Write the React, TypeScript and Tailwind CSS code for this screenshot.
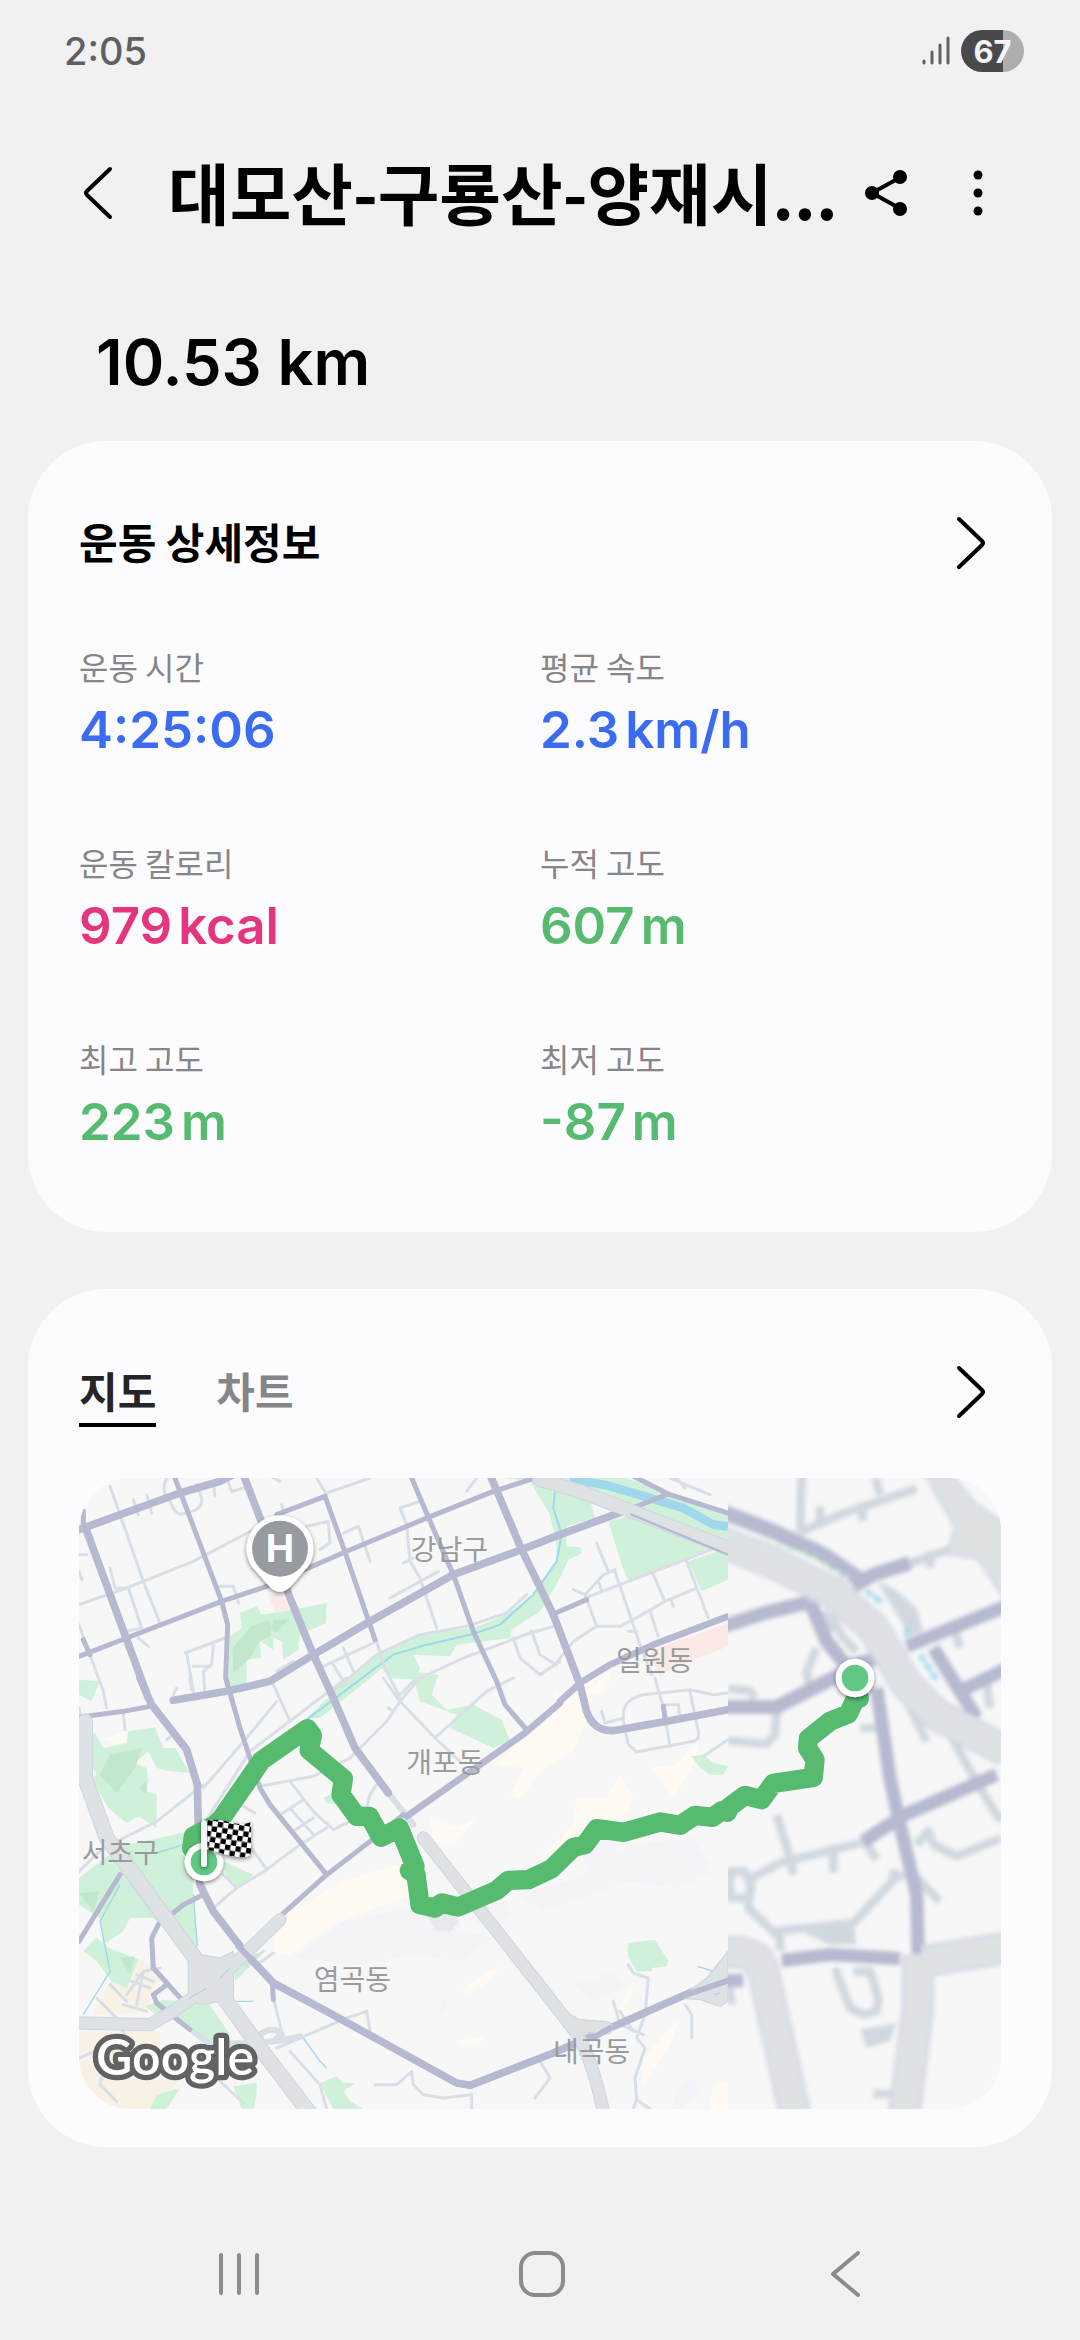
import React from "react";

const KR = "font-['Noto_Sans_CJK_KR',sans-serif]";

function Chevron({ left = false }: { left?: boolean }) {
  return (
    <svg
      viewBox="0 0 32 56"
      className={left ? "h-14 w-8 rotate-180" : "h-14 w-8"}
      fill="none"
      stroke="currentColor"
      strokeWidth="4"
      strokeLinecap="round"
      strokeLinejoin="round"
      aria-hidden="true"
    >
      <path d="M4 4 L27 26 Q29 28 27 30 L4 52" />
    </svg>
  );
}

function StatusBar() {
  return (
    <div className="flex h-[102px] items-center justify-between pr-14 pl-16 text-[#606062]">
      <span className="font-['Inter',sans-serif] text-[38px] leading-none font-medium">2:05</span>
      <div className="flex items-center gap-2.5">
        <svg viewBox="0 0 30 30" className="size-[30px]" stroke="#606062" strokeWidth="3" strokeLinecap="round" aria-label="신호">
          <path d="M3 25V27M11 16V27M19 9V27M27 2V27" />
        </svg>
        <span className="flex h-[42px] w-[63px] items-center justify-center rounded-full bg-linear-to-r from-[#49494b] from-66% to-[#aeaeb0] to-66% font-['Inter',sans-serif] text-[31px] leading-none font-bold text-[#f4f4f6]">
          67
        </span>
      </div>
    </div>
  );
}

function AppHeader() {
  return (
    <header className="flex h-[182px] items-center pr-[78px] pl-[78px]">
      <button type="button" aria-label="뒤로" className="flex w-10 shrink-0 justify-center">
        <Chevron left />
      </button>
      <h1 className="ml-[50px] min-w-0 flex-1 pb-1 text-[67px] leading-[100px] font-bold whitespace-nowrap">
        대모산-구룡산-양재시...
      </h1>
      <button type="button" aria-label="공유" className="shrink-0">
        <svg viewBox="0 0 44 48" className="h-12 w-11" aria-hidden="true">
          <path d="M37 8 L8 24 L37 40" fill="none" stroke="#000" strokeWidth="4" />
          <circle cx="36" cy="8" r="7" />
          <circle cx="8" cy="24" r="7" />
          <circle cx="36" cy="40" r="7" />
        </svg>
      </button>
      <button type="button" aria-label="더보기" className="ml-[46px] flex w-12 shrink-0 justify-center">
        <svg viewBox="0 0 12 48" className="h-12 w-3" aria-hidden="true">
          <circle cx="6" cy="6" r="4.5" />
          <circle cx="6" cy="24" r="4.5" />
          <circle cx="6" cy="42" r="4.5" />
        </svg>
      </button>
    </header>
  );
}

type Stat = { label: string; value: string; unit?: string; color: string };

const stats: Stat[] = [
  { label: "운동 시간", value: "4:25:06", color: "text-[#3a6bf0]" },
  { label: "평균 속도", value: "2.3", unit: "km/h", color: "text-[#3a6bf0]" },
  { label: "운동 칼로리", value: "979", unit: "kcal", color: "text-[#e6357f]" },
  { label: "누적 고도", value: "607", unit: "m", color: "text-[#56bb6f]" },
  { label: "최고 고도", value: "223", unit: "m", color: "text-[#56bb6f]" },
  { label: "최저 고도", value: "-87", unit: "m", color: "text-[#56bb6f]" },
];

function DetailCard() {
  return (
    <section className="rounded-[78px] bg-[#fcfcff] px-[51px] pt-[70px] pb-[70px]">
      <div className="flex items-center justify-between pr-3.5">
        <h2 className="pb-1 text-[42px] leading-[60px] font-bold">운동 상세정보</h2>
        <button type="button" aria-label="운동 상세정보 보기">
          <Chevron />
        </button>
      </div>
      <dl className="mt-[67px] grid grid-cols-2 gap-y-[68px]">
        {stats.map((s) => (
          <div key={s.label}>
            <dt className="text-[32px] leading-[48px] text-[#868688]">{s.label}</dt>
            <dd className={`flex gap-1.5 font-['Inter',sans-serif] text-[51px] leading-[80px] font-semibold ${s.color}`}>
              <span>{s.value}</span>
              {s.unit && <span>{s.unit}</span>}
            </dd>
          </div>
        ))}
      </dl>
    </section>
  );
}

const wide = "#dee2e5";
const road = "#b6b9cf";
const minor = "#d9dfe6";
const green = "#cff1d9";
const darkGreen = "#c1e7cc";
const water = "#9fd8ea";
const cream = "#fffbf3";
const mauve = "#f4f3f7";

function Terrain() {
  return (
    <g>
      <g fill={mauve}>
        <path d="M700 2040 L850 1930 1050 1890 1200 1960 1300 1980 1200 2050 1050 2030 900 2060Z M1370 1850 L1560 1800 1700 1700 1900 1680 1960 1780 1850 1830 1700 1810 1600 1850 1450 1900Z M1840 2440 L1900 2400 1920 2440 1860 2493 1840 2493Z M1200 1900 L1340 1870 1360 1900 1300 1960Z M1560 1680 L1680 1690 1640 1780 1580 1800Z M1140 2160 L1165 2180 1145 2210Z M1540 2120 L1660 2080 1690 2130 1600 2170Z" />
      </g>
      <g fill={cream}>
        <path d="M660 1920 L850 1810 1010 1760 1060 1850 950 1890 820 1940 690 2030 640 2020Z" />
        <path d="M1300 1460 L1460 1330 1520 1280 1600 1200 1590 1300 1540 1420 1440 1480 1380 1565 1350 1550 1390 1470Z" />
        <path d="M1110 1620 L1190 1650 1250 1620 1180 1700 1120 1690Z M1210 2130 L1320 2060 1290 2110 1215 2150Z M1190 2290 L1270 2275 1260 2300 1200 2300Z M1550 1560 L1640 1560 1680 1490 1720 1560 1700 1610 1560 1680 1480 1760 1440 1740 1540 1640Z M1770 1470 L1850 1460 1920 1380 1900 1460 1840 1560 1800 1500Z M1440 1360 L1490 1290 1480 1400 1440 1450Z M1680 2180 L1720 2110 1710 2160 1670 2220Z M1750 2340 L1860 2220 1830 2300 1750 2420Z M1960 2420 L2004 2410 2004 2493 1950 2493Z M1580 1240 L1660 1170 1630 1250Z M1480 1240 L1540 1270 1500 1310Z M130 1385 L200 1355 195 1395Z" />
      </g>
      <g fill="#f7f2e5">
        <path d="M57 2260 H300 V2310 L280 2400 370 2400 265 2493 H57Z M150 2110 L230 2040 300 2080 260 2200 100 2210Z" />
      </g>
      <path d="M1090 1900 L1150 1890 1200 1930 1170 1962 1130 1960Z" fill="#e6eaef" />
      <g fill="#fae9e4">
        <path d="M625 950 L670 945 685 995 645 998Z M1770 1120 L2004 1035 V1105 L1840 1170 1800 1195Z" />
      </g>
      <g fill={green}>
        <path d="M540 1005 L590 985 605 1010 680 998 800 975 798 1035 720 1070 715 1115 670 1145 665 1090 640 1080 640 1115 600 1090 603 1140 560 1145 560 1225 503 1228 510 1075 545 1050Z" />
        <path d="M1335 600 H1420 L1590 665 1605 720 1520 745 1520 805 1562 808 1566 825 1525 845 1500 900 1460 970 1440 1000 1355 1055 1350 1080 1190 1100 1170 1135 1060 1130 1080 1170 1070 1205 985 1200 965 1170 920 1210 780 1320 740 1320 830 1235 975 1115 1040 1085 1130 1060 1240 1050 1340 1010 1430 940 1490 850 1488 790 1470 710 1410 610Z" />
        <path d="M1500 600 H1700 L2004 710 V790 L1840 730Z M1645 730 L1720 710 1955 810 1705 908 1685 860Z M1885 850 L2004 810 V905 L1925 940Z" />
        <path d="M70 1370 L105 1365 130 1410 200 1395 205 1360 285 1348 300 1385 310 1410 345 1410 390 1485 330 1480 290 1470 265 1420 225 1455 260 1470 265 1510 235 1530 290 1550 290 1650 235 1615 200 1635 145 1590 95 1500 110 1490 80 1440Z" />
        <path d="M57 1800 L180 1705 390 1660 400 1850 412 2020 300 1920 210 1920 190 1960 130 2000 120 1920 57 1880Z M70 2020 L110 1978 145 2010 200 2030 235 2045 200 2130 155 2110 110 2050Z" />
        <path d="M255 2185 L310 2165 450 2180 510 2270 430 2295 360 2220 300 2220Z M490 1750 L580 1790 530 1835 500 1800Z M520 2030 L610 2025 525 2110Z" />
        <path d="M1055 1180 L1135 1190 1115 1250 1160 1295 1240 1280 1325 1325 1350 1390 1300 1410 1170 1350 1190 1310 1080 1270Z M790 1560 L820 1545 830 1580 800 1575Z M780 2415 L830 2395 850 2415 885 2415 850 2440 870 2470 910 2493 820 2493Z M520 2425 L590 2415 590 2450 580 2493 545 2493Z M57 1205 L120 1210 95 1270 57 1250Z M290 2450 L360 2430 320 2493 270 2493Z M505 1200 H560 V1215 L510 1225Z" />
        <path d="M1895 1435 L1930 1430 1960 1455 2004 1465 1990 1490 1950 1490 1920 1470Z M1705 1995 L1785 1985 1825 2050 1820 2065 1775 2070 1775 2080 1730 2080 1702 2030Z" />
      </g>
      <g fill={darkGreen}>
        <path d="M575 1045 L625 1025 645 1065 690 1025 640 1025 630 1075 600 1090 570 1140 520 1185 517 1110Z M150 1430 L245 1410 225 1470 170 1545 120 1490Z M235 1530 L262 1510 260 1550Z M57 1845 L120 1840 100 1900Z M180 2040 L225 2035 210 2090Z" />
      </g>
      <g fill="none" stroke={water}>
        <path d="M740 1325 L1000 1130 1100 1100 1240 1068 1320 1040 1420 950 1490 850 1505 770 1480 690 1485 640" strokeWidth="6" />
        <path d="M1530 603 L1640 622 1770 660 1870 690 1960 740 2004 745" strokeWidth="26" />
        <path d="M70 2210 L150 2080 120 1930 180 1820 M290 1725 L370 1700 M400 1850 L412 2005 M730 2280 L780 2350 800 2370 M530 2170 L580 2170 M1912 2065 L1968 2082" strokeWidth="4" />
      </g>
    </g>
  );
}

function LeftRoads() {
  return (
    <g fill="none" strokeLinejoin="round" strokeLinecap="round">
      <g stroke={minor} strokeWidth="9">
        <path d="M150 625 L180 710 250 910 300 1035 M57 980 L200 930 400 850 590 750 M150 870 L165 930 205 930 245 1050 200 1060 M375 1125 L495 1080 M380 1125 L400 1240 M460 1100 L455 1160 430 1180 435 1250 M400 1165 H450 M320 600 Q300 640 330 670 Q345 710 365 708 Q430 700 425 660 L410 620 M460 620 L465 655 M500 600 L515 640 550 630 M770 600 L800 650 M800 645 L930 600 M1220 640 L1250 600 M1080 670 L1020 690 1040 740 1050 850 1080 900 1130 1050 M990 960 L1135 880 M1030 855 L1060 840" />
        <path d="M740 745 L805 730 810 795 780 815 M850 765 L895 745 930 850 M480 925 L520 925 535 975 M790 1165 L950 1090 M820 1160 L850 1210 M850 1110 L880 1180 M820 1240 L950 1130 1080 1070 1220 1045 1340 1005 1400 950 M950 1090 L970 1160 1020 1260 M1020 1250 L1060 1210 1210 1140 1410 1065 1500 1040 M1360 1080 L1380 1140 1440 1190 1500 1150 M1415 1060 L1440 1130 1490 1160 M57 1040 L130 1240 140 1290 M220 665 L235 710 M260 650 L275 705 M665 680 L670 700 M640 600 L660 610 M57 830 L80 830 M57 880 L66 905 M235 1080 L265 1105 M650 1180 L700 1150" />
        <path d="M1610 795 L1645 880 1665 880 1740 1100 1775 1190 M1540 935 L1575 950 1630 890 1665 875 M1575 960 L1955 815 M1575 950 L1610 1045 1680 1045 1720 1025 1815 970 1910 930 M1880 850 L1945 1020 M1780 890 L1815 970 M1770 1000 L1795 1075 M1610 1045 L1540 1090 1485 1160 1440 1190 M1615 910 L1625 940 M1705 1060 L1730 1060 M1835 970 L1840 985" />
        <path d="M1850 600 L1875 630 M1830 600 L1950 650" />
        <path d="M430 1530 L560 1380 650 1270 M57 1780 L130 1710 290 1630 430 1520 M640 1220 L690 1330 M430 1640 L570 1420 860 1200 M600 1525 L760 1495 870 1440 980 1330 1020 1270 1080 1200 M970 1200 L1020 1270 1125 1380 1200 1450 M1125 1380 L1280 1240 1360 1200 M690 1510 L760 1600 820 1655 870 1630 920 1590 930 1550 950 1520 M660 1610 L730 1565 M700 1660 L760 1620 M690 1590 L760 1670 M460 1890 L530 1830 620 1775 720 1700 800 1650 M560 1690 L620 1775 M540 1580 L585 1605 M490 1790 L530 1830" />
        <path d="M640 2160 L670 2280 M690 2320 L780 2420 800 2493 M650 2310 L860 2220 920 2200 930 2260 M945 2420 H1010 L1055 2380 1060 2420 1090 2450 1150 2460 1235 2450 V2493 M480 2410 L550 2475 M1440 2350 L1470 2400 1425 2460 M560 2060 L610 2020 M590 2060 L640 2025 M190 1300 L195 1355 M57 1290 L75 1370 M320 1385 L345 1365 M340 1250 L350 1230 M390 1200 L395 1235 M985 1290 L1000 1300" />
        <path d="M1690 1330 V1300 Q1700 1260 1750 1250 L1890 1235 1960 1250 2004 1245 M1690 1330 L1705 1400 1730 1422 1900 1390 Q1920 1385 1915 1360 L1890 1240 M1785 1200 L1810 1290 1830 1405 M1625 1300 L1635 1335 1690 1320 M1815 1280 H1855 L1860 1325 M1705 2060 L1720 2085 1765 2100 1755 2210 1730 2280 1755 2310 1725 2400 1730 2465 1770 2493 M1730 2460 L1720 2493 M1875 2180 L1895 2210 V2280 M1930 1435 L2004 1385 M1660 2170 L1680 2240 1750 2270 M1680 2200 L1720 2260" />
        <path d="M200 2150 L250 2080 300 2070 M190 2180 L260 2200 M215 2110 L270 2130 M230 2090 L280 2110 M110 2160 L190 2240 M150 2120 L200 2170 M250 2080 L230 2180 M57 2340 L130 2310 M120 2420 L130 2380 M120 2420 L170 2470 M180 2240 L230 2350" />
      </g>
      <g stroke={minor}>
        <path d="M400 2260 L450 2300 650 2290 720 2275" strokeWidth="18" />
        <path d="M610 2310 L600 2270 Q640 2240 665 2270 L640 2290" strokeWidth="18" />
        <path d="M985 1545 L1060 1640 M200 1790 L300 1930" strokeWidth="18" />
      </g>
      <g stroke={road}>
        <path d="M57 755 L360 645 480 610 520 590 M75 745 L200 1085 265 1260 M340 1267 L500 1240 630 1210 760 1130 930 1030 1180 890 1385 815 1500 770 1690 700" strokeWidth="23" />
        <path d="M240 1200 L275 1280 380 1415 412 1520 415 1650 420 1820 460 1900 560 2030 640 2115 800 2200 1190 2415 1230 2422 1480 2325 1650 2250 1900 2140 2004 2110" strokeWidth="23" />
        <path d="M550 590 L600 720 690 960 760 1130 820 1260 885 1410 985 1545 M1290 590 L1385 815 1480 1010 1560 1220 1580 1300 Q1600 1360 1660 1358 L1820 1330 2004 1295" strokeWidth="23" />
        <path d="M1500 1270 L1560 1215 1650 1160 1780 1100 2004 1015 M1040 1615 L1395 1365 1500 1275" strokeWidth="20" />
        <path d="M345 600 L485 970 503 1040 497 1200 540 1350 600 1530 630 1580 800 1790 M57 1135 L200 1080 485 970 620 925 855 822 1105 718 1300 640 1410 605 M650 710 L795 655 855 822 945 1085 M1055 600 L1105 718 1180 890 1240 1060 1310 1210 1335 1280 1395 1350 M57 1318 L190 1300 270 1285 M70 740 V700 M70 1085 L90 1130 M1030 1610 L930 1690 800 1790 660 1915 M420 1855 L370 1880 340 1905 M180 1790 L100 1920 57 1990 M295 1940 L275 1980 280 2070 370 2170 M320 2120 L280 2150 290 2175 390 2255 M637 2115 L640 2165 M1480 1008 L1580 965 M1810 1285 L1817 1330 M1720 595 L1830 650 2004 705 M1730 685 L1820 650" strokeWidth="15" />
      </g>
      <g stroke="#d1d7df">
        <path d="M1440 605 L1560 640 1690 690 2004 810" strokeWidth="44" />
        <path d="M75 1330 V1500 L140 1680 200 1760 420 2060 600 2310 745 2500" strokeWidth="48" />
        <path d="M57 2235 L270 2240 340 2200 480 2100 660 1925 M1090 1680 L1460 2150 1530 2240 Q1590 2310 1630 2500 M1530 2240 L1640 2250" strokeWidth="40" />
      </g>
      <path d="M385 2020 L420 2030 480 2040 520 2020 V2160 L430 2180 385 2170Z M1480 2180 L1530 2210 1590 2240 1560 2290 1530 2260Z M1860 2160 L1940 2100 2004 2020 V2170 L1980 2185 1920 2165Z" fill={wide} stroke="#d1d7df" strokeWidth="4" />
      <g stroke={wide}>
        <path d="M1440 605 L1560 640 1690 690 2004 810" strokeWidth="37" />
        <path d="M75 1330 V1500 L140 1680 200 1760 420 2060 600 2310 745 2500" strokeWidth="41" />
        <path d="M57 2235 L270 2240 340 2200 480 2100 660 1925 M1090 1680 L1460 2150 1530 2240 Q1590 2310 1630 2500 M1530 2240 L1640 2250" strokeWidth="33" />
      </g>
      <path d="M1715 710 L2004 830" stroke={road} strokeWidth="7" />
      <path d="M1860 2157 L2004 2108 M1600 2280 L1650 2250 M535 2005 L580 2050" stroke={road} strokeWidth="18" />
      <path d="M480 2100 L510 2070 M390 2160 L440 2130 M1965 2150 L1980 2145" stroke="#c6cbd8" strokeWidth="4" />
    </g>
  );
}

function RightTile() {
  return (
    <g clipPath="url(#rightTile)">
      <rect x="2004" y="600" width="820" height="1900" fill="#f7f7f8" />
      <g filter="url(#tileBlur)" fill="none" strokeLinejoin="round">
        <g stroke="#d0d8df" strokeWidth="26">
          <path d="M2225 590 L2220 765 M2220 762 L2340 710 2570 632 M2280 685 V730 M2408 700 V730 M2445 600 L2462 650 M2540 860 L2680 810 M2610 820 V870" />
          <path d="M2270 1110 L2240 1180 2250 1240 M2310 1010 L2350 1080 2390 1120 M2290 1000 L2320 1060 M2004 1233 L2070 1238 2085 1260 M2004 1388 L2120 1398 2145 1370 2150 1300 M2400 1350 H2450 M2530 1250 L2600 1390 M2670 1370 L2760 1530 2823 1630 M2680 1040 L2700 1110 M2780 1220 L2790 1290" />
          <path d="M2150 1610 L2190 1740 2200 1790 M2075 1800 L2160 1755 2420 1690 M2075 1790 L2065 1890 2160 1980 V2020 M2010 1780 H2055 L2075 1830 2065 1860 H2010Z M2140 1960 L2380 1935 2520 1785 M2320 1700 V1785 M2420 1700 L2450 1745 M2490 1780 L2530 1800 M2560 1790 L2640 1870 M2570 1700 L2605 1660 2620 1700 2690 1735 2823 1680" />
          <path d="M2325 2070 L2370 2190 2410 2210 2450 2200 2455 2160 2430 2080 2380 2080 M2004 2110 L2016 2180 M2440 2448 H2510" />
        </g>
        <path d="M2220 1960 L2380 1930 2390 2000 2310 2000Z M2400 2255 L2510 2235 2490 2290 2420 2310Z M2450 910 L2500 930 2570 990 2590 1060 2550 1075Z" fill="#d0d8df" />
        <g stroke={road}>
          <path d="M1990 703 L2140 760 2290 830 2400 905" strokeWidth="46" />
          <path d="M2380 925 L2440 890 2550 855 M1990 1045 L2120 1003 2250 972 M2250 972 L2300 1090 2360 1165 2460 1140 M1990 1287 H2150 L2310 1205 2380 1170" strokeWidth="42" />
          <path d="M2450 1230 L2490 1500 2520 1640 2570 1850 2575 2030 M2410 1690 L2530 1612 2810 1490 M2165 2048 L2310 2030 2520 2042 M2540 1105 L2840 984 M2620 1110 L2700 1240 2750 1320 M2700 1240 L2840 1172 M1990 2108 H2050" strokeWidth="40" />
        </g>
        <path d="M2590 580 H2670 L2740 670 2840 740 V970 L2750 840 2660 830 2685 750Z" fill={wide} stroke="#d3d6e4" strokeWidth="7" />
        <g stroke="#d2d6e3">
          <path d="M1980 790 L2140 855 2320 945 2440 1050 2540 1220 2630 1310 2840 1420" strokeWidth="98" />
          <path d="M1980 2025 Q2095 2010 2110 2080 L2210 2530 M2575 2030 L2573 2200 2530 2530 M2590 2050 L2840 2010" strokeWidth="98" />
        </g>
        <g stroke={wide}>
          <path d="M1980 790 L2140 855 2320 945 2440 1050 2540 1220 2630 1310 2840 1420" strokeWidth="86" />
          <path d="M1980 2025 Q2095 2010 2110 2080 L2210 2530 M2575 2030 L2573 2200 2530 2530 M2590 2050 L2840 2010" strokeWidth="84" />
        </g>
        <path d="M2110 790 L2240 830 2365 900" stroke={green} strokeWidth="12" strokeDasharray="22 16" />
        <path d="M2418 938 L2468 975 M2540 1050 V1080 M2580 1130 L2630 1205" stroke="#a5dcec" strokeWidth="16" strokeDasharray="26 6" />
      </g>
    </g>
  );
}

const places = [
  { name: "강남구", x: 1168, y: 845 },
  { name: "일원동", x: 1784, y: 1180 },
  { name: "개포동", x: 1155, y: 1484 },
  { name: "서초구", x: 181, y: 1756 },
  { name: "염곡동", x: 877, y: 2136 },
  { name: "내곡동", x: 1595, y: 2352 },
];

function RouteMap() {
  return (
    <svg viewBox="57 600 2766 1893" className="mt-[51px] block h-auto w-full rounded-[52px]" role="img" aria-label="운동 경로 지도">
      <defs>
        <clipPath id="leftTile">
          <rect x="57" y="600" width="1947" height="1893" />
        </clipPath>
        <clipPath id="rightTile">
          <rect x="2004" y="600" width="820" height="1893" />
        </clipPath>
        <filter id="tileBlur" filterUnits="userSpaceOnUse" x="1950" y="550" width="950" height="2000">
          <feGaussianBlur stdDeviation="6" />
        </filter>
        <filter id="pinShadow" x="-30%" y="-30%" width="160%" height="160%">
          <feDropShadow dx="0" dy="5" stdDeviation="6" floodOpacity="0.5" />
        </filter>
        <pattern id="checks" width="32" height="32" patternUnits="userSpaceOnUse" patternTransform="translate(443 1626) rotate(9)">
          <rect width="32" height="32" fill="#fff" />
          <path d="M0 0H16V16H0Z M16 16H32V32H16Z" fill="#000" />
        </pattern>
      </defs>
      <rect x="57" y="600" width="2766" height="1893" fill="#f7f7f8" />
      <g clipPath="url(#leftTile)">
        <Terrain />
        <LeftRoads />
      </g>
      <RightTile />
      <g className="font-['Noto_Sans_CJK_KR',sans-serif]" fontSize="84" fill="#9a9b9d" textAnchor="middle">
        {places.map((p) => (
          <text key={p.name} x={p.x} y={p.y}>
            {p.name}
          </text>
        ))}
      </g>
      <path
        d="M430 1750 L395 1710 400 1675 465 1640 485 1620 605 1447 742 1352 757 1372 748 1417 850 1502 843 1550 890 1615 928 1615 963 1678 1018 1650 1065 1765 1048 1777 1068 1790 1080 1880 1125 1890 1145 1875 1195 1887 1310 1837 1345 1807 1405 1805 1475 1772 1540 1708 1575 1700 1610 1652 1692 1663 1800 1632 1860 1642 1905 1612 1958 1618 1985 1598 2002 1603 2010 1585 2055 1552 2105 1565 2140 1516 2260 1498 2265 1445 2243 1410 2245 1382 2310 1330 2365 1308 2385 1265 2398 1262 2385 1200"
        fill="none"
        stroke="#56bb6f"
        strokeWidth="58"
        strokeLinecap="round"
        strokeLinejoin="round"
      />
      <g filter="url(#pinShadow)">
        <circle cx="2385" cy="1200" r="58" fill="#fff" />
        <circle cx="432" cy="1752" r="58" fill="#fff" />
      </g>
      <circle cx="2385" cy="1200" r="40" fill="#62c785" />
      <circle cx="432" cy="1752" r="40" fill="#62c785" />
      <g filter="url(#pinShadow)">
        <path d="M443 1626 Q480 1622 515 1634 Q550 1642 573 1633 V1730 Q550 1744 505 1732 Q470 1720 443 1716Z" fill="url(#checks)" />
        <path d="M423 1640 Q423 1626 432 1626 Q441 1626 441 1640 V1758 Q441 1767 432 1767 Q423 1767 423 1758Z" fill="#f6f8f7" />
      </g>
      <g filter="url(#pinShadow)">
        <path d="M660 712 A100 100 0 0 1 745 865 L690 928 Q660 955 630 928 L575 865 A100 100 0 0 1 660 712Z" fill="#fff" />
      </g>
      <circle cx="660" cy="812" r="84" fill="#979ba0" />
      <text x="660" y="852" className="font-['Inter',sans-serif]" fontSize="114" fontWeight="700" fill="#fff" textAnchor="middle">
        H
      </text>
      <text
        x="108"
        y="2391"
        className="font-['Lato',sans-serif]"
        fontSize="150"
        fontWeight="600"
        fill="#fff"
        stroke="#626262"
        strokeWidth="32"
        strokeLinejoin="round"
        paintOrder="stroke"
      >
        Google
      </text>
    </svg>
  );
}

function MapCard() {
  return (
    <section className="mt-[57px] rounded-[78px] bg-[#fcfcff] px-[51px] pt-[68px] pb-[38px]">
      <div className="flex items-center justify-between pr-3.5">
        <div role="tablist" className="flex gap-[60px] text-[42px] leading-[60px] font-bold">
          <button type="button" role="tab" aria-selected="true" className="border-b-4 border-black py-[3px] text-[#252527]">
            지도
          </button>
          <button type="button" role="tab" aria-selected="false" className="border-b-4 border-transparent py-[3px] text-[#868688]">
            차트
          </button>
        </div>
        <button type="button" aria-label="지도 보기">
          <Chevron />
        </button>
      </div>
      <RouteMap />
    </section>
  );
}

function NavBar() {
  return (
    <nav className="mt-auto grid h-[132px] grid-cols-3 items-center justify-items-center pr-[84px] pl-[88px] text-[#8b8b8b]">
      <button type="button" aria-label="최근 앱">
        <svg viewBox="0 0 48 48" className="size-12" stroke="currentColor" strokeWidth="4" strokeLinecap="round">
          <path d="M6 5V43M24 5V43M42 5V43" />
        </svg>
      </button>
      <button type="button" aria-label="홈">
        <svg viewBox="0 0 48 48" className="size-12" fill="none" stroke="currentColor" strokeWidth="4">
          <rect x="3" y="3" width="42" height="42" rx="14" />
        </svg>
      </button>
      <button type="button" aria-label="뒤로 가기">
        <svg viewBox="0 0 48 48" className="size-12" fill="none" stroke="currentColor" strokeWidth="4" strokeLinecap="round" strokeLinejoin="round">
          <path d="M37 3L12 24L37 45" />
        </svg>
      </button>
    </nav>
  );
}

export default function App() {
  return (
    <div className={`flex min-h-screen flex-col bg-[#f1f1f3] text-black ${KR}`}>
      <StatusBar />
      <AppHeader />
      <main className="px-7">
        <p className="flex h-[157px] items-center pl-[68px] font-['Inter',sans-serif] text-[63px] leading-none font-semibold">
          10.53 km
        </p>
        <DetailCard />
        <MapCard />
      </main>
      <NavBar />
    </div>
  );
}
